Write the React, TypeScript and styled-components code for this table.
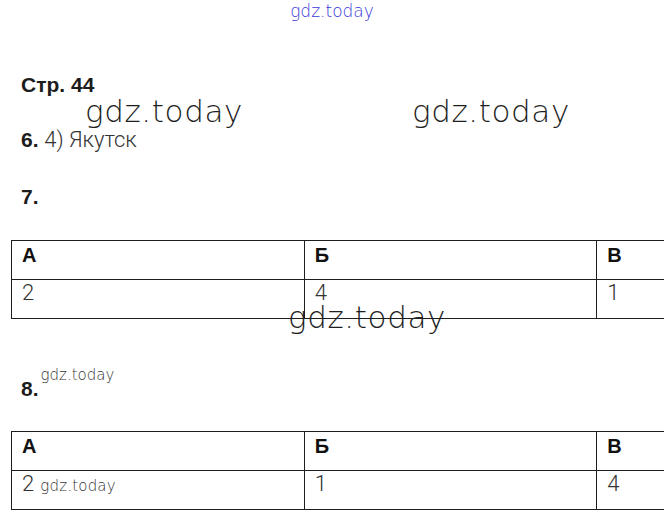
import React from 'react';
import styled, { createGlobalStyle } from 'styled-components';

const GlobalStyle = createGlobalStyle`
  html, body {
    margin: 0;
    padding: 0;
    background: #ffffff;
    overflow: hidden;
  }
  body {
    font-family: "Liberation Sans", Arial, sans-serif;
    color: #1c1c1c;
  }
`;

const Page = styled.div`
  position: relative;
  width: 664px;
  height: 523px;
  overflow: hidden;
`;

const TopMark = styled.div`
  padding-top: 1px;
  text-align: center;
  font-family: "DejaVu Sans", sans-serif;
  font-weight: 200;
  font-size: 17px;
  line-height: 20px;
  color: #3a3ad8;
`;

const Line = styled.div<{ $top: number }>`
  margin-top: ${(p) => p.$top}px;
  padding-left: 21px;
  font-size: 21px;
  line-height: 20px;
  font-weight: 700;
  white-space: nowrap;
`;

const Answer = styled.span`
  font-family: "Liberation Sans Narrow", Roboto, "Liberation Sans", sans-serif;
  font-weight: 300;
  font-size: 22px;
  color: #333;
`;

const MarkRow = styled.div`
  display: flex;
  gap: 169px;
  padding-left: 85px;
  height: 30px;
`;

const Mark = styled.span<{ $size: number }>`
  font-family: "DejaVu Sans", sans-serif;
  font-weight: 200;
  font-size: ${(p) => p.$size}px;
  line-height: ${(p) => p.$size + 1}px;
  color: #1e1e1e;
  white-space: nowrap;
`;

const BigMark = styled(Mark)`
  letter-spacing: 0.6px;
`;

const SupMark = styled(Mark)`
  position: relative;
  top: -16px;
  margin-left: 2px;
  color: #333;
`;

const FloatMark = styled(BigMark)`
  position: absolute;
  left: 288px;
  top: 301px;
`;

const Table = styled.table<{ $top: number }>`
  margin-top: ${(p) => p.$top}px;
  margin-left: 11px;
  width: 879px;
  table-layout: fixed;
  border-collapse: collapse;
`;

const Cell = styled.td<{ $head?: boolean }>`
  height: ${(p) => (p.$head ? '35px' : '36px')};
  padding: ${(p) => (p.$head ? '3px' : '2px')} 0 0 10px;
  border: 1px solid #1e1e1e;
  vertical-align: top;
  font-size: ${(p) => (p.$head ? '20px' : '22px')};
  font-weight: ${(p) => (p.$head ? 700 : 300)};
  font-family: ${(p) =>
    p.$head
      ? '"Liberation Sans", Arial, sans-serif'
      : '"Liberation Sans Narrow", Roboto, "Liberation Sans", sans-serif'};
  color: ${(p) => (p.$head ? '#111' : '#333')};
  line-height: 22px;
  white-space: nowrap;
`;

const CellMark = styled(Mark)`
  margin-left: 6px;
  color: #333;
  letter-spacing: 0.2px;
`;

type Row = [React.ReactNode, React.ReactNode, React.ReactNode];

function AnswerTable({ top, rows }: { top: number; rows: Row }) {
  return (
    <Table $top={top}>
      <tbody>
        <tr>
          <Cell $head>А</Cell>
          <Cell $head>Б</Cell>
          <Cell $head>В</Cell>
        </tr>
        <tr>
          {rows.map((r, i) => (
            <Cell key={i}>{r}</Cell>
          ))}
        </tr>
      </tbody>
    </Table>
  );
}

export default function App() {
  return (
    <Page>
      <GlobalStyle />
      <TopMark>gdz.today</TopMark>

      <Line $top={54}>Стр. 44</Line>
      <MarkRow>
        <BigMark $size={31}>gdz.today</BigMark>
        <BigMark $size={31}>gdz.today</BigMark>
      </MarkRow>
      <Line $top={5}>
        6. <Answer>4) Якутск</Answer>
      </Line>

      <Line $top={37}>7.</Line>
      <AnswerTable top={33} rows={['2', '4', '1']} />
      <FloatMark $size={31}>gdz.today</FloatMark>

      <Line $top={60}>
        8.<SupMark $size={15}>gdz.today</SupMark>
      </Line>
      <AnswerTable
        top={32}
        rows={[
          <>
            2<CellMark $size={15}>gdz.today</CellMark>
          </>,
          '1',
          '4',
        ]}
      />
    </Page>
  );
}
